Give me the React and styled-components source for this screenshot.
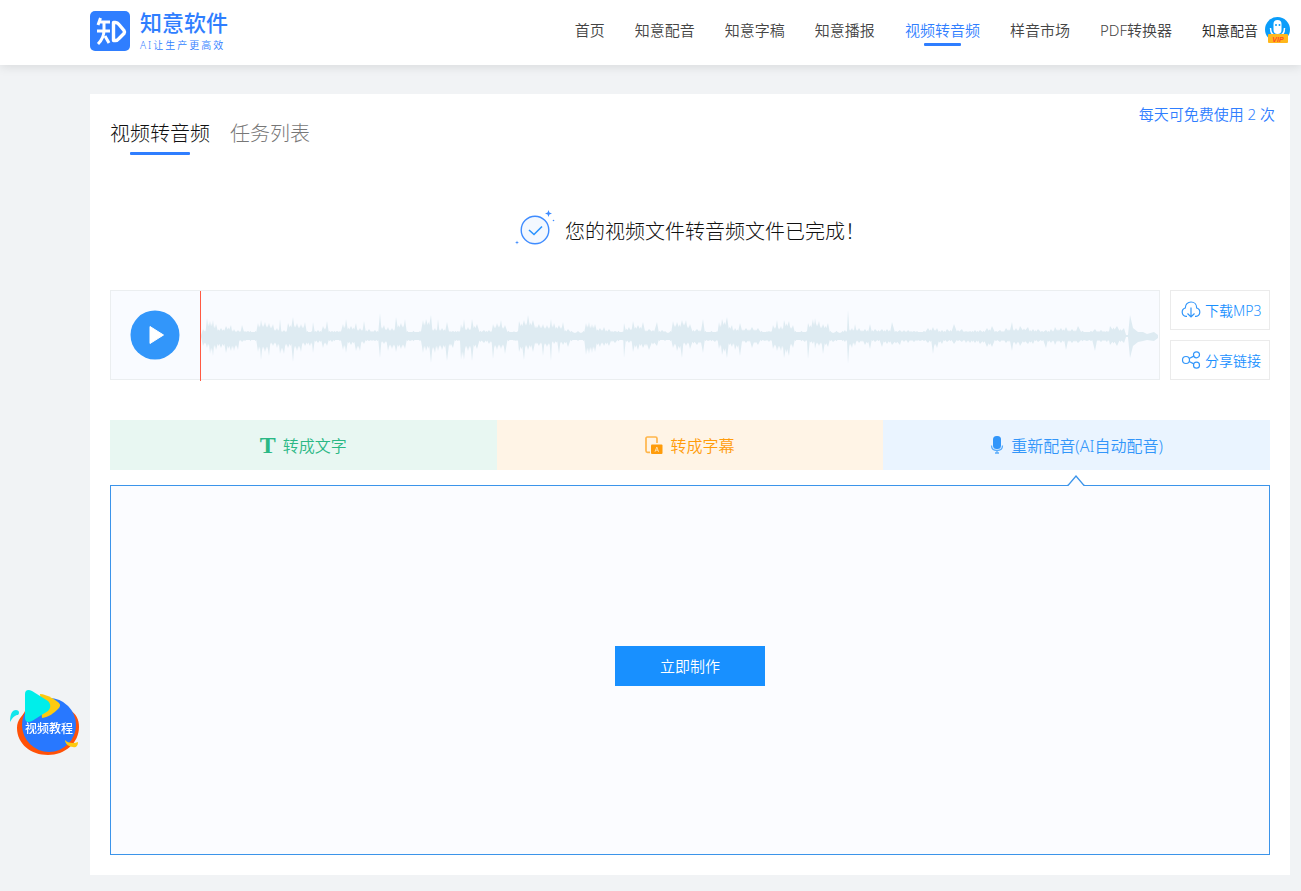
import React, { Fragment, useState } from "react";
import styled, { createGlobalStyle, css } from "styled-components";

const GlobalStyles = createGlobalStyle`
  * {
    box-sizing: border-box;
  }
  body {
    margin: 0;
    background: #f1f3f5;
    color: #222222;
    font-family: "Noto Sans", "Noto Sans CJK SC", "Microsoft YaHei", sans-serif;
    font-weight: 350;
    font-size: 15px;
  }
  button {
    font: inherit;
    border: 0;
    padding: 0;
    cursor: pointer;
  }
  a {
    text-decoration: none;
  }
  svg {
    display: block;
    flex-shrink: 0;
  }
`;

const links = [
  "首页",
  "知意配音",
  "知意字稿",
  "知意播报",
  "视频转音频",
  "样音市场",
  "PDF转换器",
];

/* x, height above the axis, height below the axis */
const peaks = [
  [2, 7, 10], [6, 18, 12], [9, 15, 18], [12, 16, 20], [15, 12, 14], [20, 8, 12],
  [25, 10, 17], [30, 11, 15], [33, 7, 15], [37, 6, 14], [41, 11, 6], [47, 5, 4],
  [52, 4, 4], [57, 13, 16], [60, 16, 24], [64, 14, 16], [68, 13, 20], [72, 12, 10],
  [76, 8, 12], [79, 17, 18], [83, 6, 18], [87, 13, 12], [92, 19, 26], [96, 13, 15],
  [100, 12, 16], [104, 14, 10], [109, 4, 10], [112, 14, 17], [117, 6, 7], [122, 10, 12],
  [126, 15, 10], [131, 5, 6], [136, 5, 4], [142, 12, 14], [145, 17, 17], [150, 10, 9],
  [155, 13, 15], [159, 8, 15], [163, 15, 8], [168, 7, 5], [174, 6, 5], [179, 23, 22],
  [183, 11, 8], [187, 9, 15], [191, 8, 13], [195, 19, 16], [200, 13, 13], [204, 17, 13],
  [209, 4, 5], [216, 4, 4], [222, 16, 17], [225, 17, 15], [230, 21, 27], [234, 8, 17],
  [237, 17, 15], [241, 8, 14], [246, 14, 25], [252, 5, 12], [257, 5, 5], [260, 12, 24],
  [263, 17, 24], [267, 9, 15], [271, 17, 25], [276, 12, 13], [283, 6, 7], [288, 6, 8],
  [292, 12, 23], [296, 13, 14], [300, 16, 13], [304, 11, 18], [311, 4, 4], [315, 4, 5],
  [318, 15, 16], [323, 16, 24], [327, 21, 14], [332, 16, 16], [338, 12, 10], [342, 12, 20],
  [346, 11, 11], [350, 17, 25], [353, 13, 8], [358, 11, 18], [362, 14, 9], [367, 7, 11],
  [374, 3, 4], [380, 3, 4], [385, 13, 19], [388, 14, 18], [391, 12, 17], [394, 12, 16],
  [399, 8, 11], [403, 9, 10], [408, 7, 10], [414, 5, 7], [421, 4, 4], [423, 13, 22],
  [428, 9, 7], [432, 15, 16], [437, 11, 14], [442, 14, 12], [448, 7, 14], [456, 14, 10],
  [461, 6, 4], [467, 3, 4], [472, 15, 12], [476, 14, 15], [481, 16, 22], [485, 16, 10],
  [489, 12, 13], [496, 7, 9], [502, 17, 17], [507, 4, 5], [514, 4, 6], [518, 14, 13],
  [521, 17, 19], [526, 19, 22], [531, 11, 11], [534, 8, 14], [539, 13, 20], [545, 8, 7],
  [551, 9, 12], [557, 8, 9], [564, 4, 5], [568, 5, 6], [572, 11, 13], [576, 16, 15],
  [580, 10, 15], [583, 16, 22], [588, 15, 20], [592, 11, 12], [597, 4, 4], [604, 4, 6],
  [607, 13, 23], [612, 17, 8], [614, 18, 13], [618, 15, 10], [622, 12, 18], [627, 13, 11],
  [632, 3, 6], [639, 3, 4], [644, 6, 6], [647, 26, 28], [651, 8, 12], [654, 12, 10],
  [658, 8, 7], [664, 7, 9], [669, 12, 13], [674, 7, 6], [681, 7, 11], [686, 7, 8],
  [691, 14, 9], [699, 6, 9], [703, 6, 6], [707, 6, 7], [713, 5, 6], [719, 4, 5],
  [727, 8, 7], [732, 9, 18], [736, 8, 12], [741, 6, 8], [746, 7, 6], [753, 12, 8],
  [761, 7, 6], [765, 5, 7], [769, 5, 7], [774, 6, 7], [779, 6, 8], [786, 8, 11],
  [791, 10, 11], [799, 6, 6], [805, 8, 7], [811, 14, 15], [815, 8, 9], [819, 10, 10],
  [827, 9, 8], [832, 7, 8], [837, 7, 6], [845, 6, 12], [850, 7, 7], [854, 9, 9],
  [860, 8, 7], [865, 9, 14], [871, 7, 7], [877, 10, 7], [886, 4, 5], [894, 7, 15],
  [900, 6, 6], [906, 5, 6], [909, 10, 9], [916, 10, 10], [923, 8, 7],
];

/* the recording breaks off for a moment before the last burst */
const tail = [
  [925, 1, 1], [927, 1, 1], [929, 21, 22], [932, 8, 10], [937, 4, 6],
  [942, 4, 5], [946, 2, 4], [953, 4, 5], [957, 1, 2],
];

const AXIS = 45;

const valley = (a, b) => Math.max(4, Math.min(a, b) * 0.65);

const buildWave = () => {
  const points = [[0, 1, 1]];
  peaks.forEach((peak, i) => {
    points.push(peak);
    const next = peaks[i + 1];
    if (next) {
      const [x, up, down] = peak;
      const gap = next[0] - x;
      const low = [valley(up, next[1]), valley(down, next[2])];
      points.push([x + gap * 0.35, ...low]);
      // a small tooth keeps wide gaps from going flat
      points.push([x + gap * 0.5, low[0] * 1.3, low[1] * 1.3]);
      points.push([x + gap * 0.65, ...low]);
    }
  });
  points.push(...tail);
  const top = points.map(([x, up]) => `${x},${AXIS - up}`);
  const bottom = points.map(([x, , down]) => `${x},${AXIS + down}`).reverse();
  return [...top, ...bottom].join(" ");
};

const LogoMark = () => (
  <svg width="40" height="40" viewBox="0 0 40 40" fill="none">
    <rect width="40" height="40" rx="5" fill="#2f7eff" />
    <g stroke="#ffffff" strokeWidth="3" strokeLinejoin="round">
      <path d="M10.5 7 8 14M9 11h11M7 20h13M14 11v8c0 6-2 10-6 14M15 25l4 7" />
      <path
        d="M23.500 11.500h2q2 0 3.500 2l5 6q1 1.500 0 3l-5 5q-1.500 2-3.500 2h-2z"
        strokeWidth="3.400"
      />
    </g>
  </svg>
);

const Avatar = () => (
  <svg width="25" height="27" viewBox="0 0 25 27">
    <circle cx="12.500" cy="12.500" r="12.500" fill="#0a9dfa" />
    <rect x="8.500" y="3" width="8" height="14" rx="4" fill="#ffffff" />
    <path d="M5.500 11c0 5 2 8 7 8s7-3 7-8" fill="none" stroke="#ffffff" strokeWidth="1.500" />
    <circle cx="11" cy="8" r="1" fill="#0a9dfa" />
    <circle cx="14.500" cy="8" r="1" fill="#0a9dfa" />
    <rect x="3" y="17" width="20" height="9" rx="1" fill="#ffb71c" />
    <text
      x="13"
      y="24.500"
      textAnchor="middle"
      fontSize="7"
      fontWeight="700"
      fontStyle="italic"
      fontFamily="Liberation Sans, sans-serif"
      fill="#ff4a26"
    >
      VIP
    </text>
  </svg>
);

const DoneIcon = () => (
  <svg width="40" height="36" viewBox="0 0 40 36" fill="none" stroke="#3f8cff">
    <circle cx="20" cy="20" r="13.800" fill="#f3f8ff" strokeWidth="1.400" />
    <path d="M14 20l5 4.500 8-8" stroke="#2a93ff" strokeWidth="1.600" />
    <path d="M33.500 0l.9 2.600 2.600.9-2.600.9-.9 2.600-.9-2.600-2.600-.9 2.600-.9z" fill="#3f8cff" stroke="none" />
    <path d="M2 30.500l.5 1.500 1.500.5-1.500.5-.5 1.500-.5-1.500L0 32.500l1.500-.5z" fill="#3f8cff" stroke="none" />
    <circle cx="38.500" cy="10.500" r=".8" fill="#3f8cff" stroke="none" />
  </svg>
);

const PlayIcon = () => (
  <svg width="50" height="50" viewBox="0 0 50 50">
    <circle cx="25" cy="25" r="24.500" fill="#3296fa" />
    <path d="M20 16.500v17l13.500-8.500z" fill="#ffffff" stroke="#ffffff" strokeLinejoin="round" />
  </svg>
);

const CloudIcon = () => (
  <svg width="20" height="18" viewBox="0 0 20 18" fill="none" stroke="#3296fa" strokeWidth="1.200">
    <path d="M6 15.400H5A4.300 4.300 0 0 1 4.300 7C4.300 3.500 6.700 1 10 1s5.700 2.500 5.700 6A4.300 4.300 0 0 1 15 15.400h-1" />
    <path d="M10 6.500v9.500M6.500 12.500 10 16l3.500-3.500" />
  </svg>
);

const ShareIcon = () => (
  <svg width="20" height="18" viewBox="0 0 20 18" fill="none" stroke="#3296fa" strokeWidth="1.200">
    <circle cx="5" cy="9" r="3.500" />
    <circle cx="15.500" cy="3.800" r="3" />
    <circle cx="15.500" cy="14.200" r="3" />
    <path d="M8.200 7.500 12.800 5.100M8.200 10.500l4.600 2.400" />
  </svg>
);

const SubtitleIcon = () => (
  <svg width="18" height="18" viewBox="0 0 18 18">
    <path d="M5 16.300H2.500a1.500 1.500 0 0 1-1.500-1.500v-12A1.500 1.500 0 0 1 2.500 1h8A1.500 1.500 0 0 1 12 2.500V7" fill="none" stroke="#ffb54a" strokeWidth="1.700" />
    <rect x="6" y="8.500" width="11.500" height="9.500" rx="1" fill="#ff9c0b" />
    <path d="M10 15.800l1.800-4.800 1.800 4.800M10.600 14.200h2.400" fill="none" stroke="#ffe2b5" strokeWidth=".9" />
  </svg>
);

const MicIcon = () => (
  <svg width="14" height="18" viewBox="0 0 14 18" fill="none" stroke="#5aacfb" strokeWidth="1.300">
    <rect x="3" y="0" width="8" height="13" rx="3.500" fill="#3296fa" stroke="none" />
    <path d="M1.500 9.500c0 3 2.200 5 5.500 5s5.500-2 5.500-5M7 14.500V17M5 17h4" />
  </svg>
);

const TutorialArt = () => (
  <svg width="70" height="66" viewBox="0 0 70 66">
    <path d="M7 38c0-9 6-12 8-17l45-1c6 4 9 9 9 17 0 16-14 28-31 28S7 54 7 38z" fill="#ff5108" />
    <circle cx="39" cy="35" r="27" fill="#2878ff" />
    <path d="M30 4c7 0 17 7 19 9 2 2 1 4-1 6-4 4-9 8-16 9z" fill="#fdca10" />
    <path d="M15 4c0-4 3-5 7-3l16 10c3 3 3 7 0 10L22 31c-4 2-7 1-7-3z" fill="#00eeea" />
    <path d="M0 32c0-8 2-12 6-12 3 0 4 3 2 5-3 0-5 2-8 7z" fill="#12e6ec" />
    <path d="M55 50c2 3 9 4 13 2 0 4-2 6-5 5-4 0-8-3-8-7z" fill="#fdca10" />
  </svg>
);

const App = () => {
  const [tab, setTab] = useState("convert");

  return (
    <Fragment>
      <GlobalStyles />
      <Header>
        <Logo href="#home">
          <LogoMark />
          <LogoText>
            <LogoName>知意软件</LogoName>
            <LogoSlogan>AI让生产更高效</LogoSlogan>
          </LogoText>
        </Logo>
        <Nav>
          {links.map((link) => (
            <NavLink key={link} href={`#${link}`} $active={link === "视频转音频"}>
              {link}
            </NavLink>
          ))}
          <User href="#user">
            知意配音
            <Avatar />
          </User>
        </Nav>
      </Header>

      <Card>
        <CardHead>
          <Tabs>
            <Tab $active={tab === "convert"} onClick={() => setTab("convert")}>
              视频转音频
            </Tab>
            <Tab $active={tab === "tasks"} onClick={() => setTab("tasks")}>
              任务列表
            </Tab>
          </Tabs>
          <Quota>每天可免费使用 2 次</Quota>
        </CardHead>

        <Result>
          <DoneIcon />
          您的视频文件转音频文件已完成！
        </Result>

        <Audio>
          <Player>
            <PlayButton aria-label="播放">
              <PlayIcon />
            </PlayButton>
            <Track>
              <Wave viewBox="0 0 958 88" preserveAspectRatio="none">
                <polygon points={buildWave()} fill="#deebf2" />
              </Wave>
              <Cursor />
            </Track>
          </Player>
          <Actions>
            <ActionButton>
              <CloudIcon />
              下载MP3
            </ActionButton>
            <ActionButton>
              <ShareIcon />
              分享链接
            </ActionButton>
          </Actions>
        </Audio>

        <Modes>
          <Mode $color="#2bb885" $bg="#e8f7f2">
            <LetterIcon>T</LetterIcon>
            转成文字
          </Mode>
          <Mode $color="#ff9c0b" $bg="#fff4e6">
            <SubtitleIcon />
            转成字幕
          </Mode>
          <Mode $color="#3296fa" $bg="#eaf4ff">
            <MicIcon />
            重新配音(AI自动配音)
          </Mode>
        </Modes>

        <Panel>
          <Pointer width="18" height="11" viewBox="0 0 18 11">
            <path d="M0 10.500 9 0l9 10.500V11H0z" fill="#fbfcff" />
            <path d="M0 10.500h1L9 1l8 9.500h1" fill="none" stroke="#3b94ea" strokeWidth="1.300" />
          </Pointer>
          <MakeButton>立即制作</MakeButton>
        </Panel>
      </Card>

      <Tutorial href="#tutorial">
        <TutorialArt />
        <TutorialLabel>视频教程</TutorialLabel>
      </Tutorial>
    </Fragment>
  );
};

export default App;

const Header = styled.header`
  display: flex;
  justify-content: space-between;
  align-items: flex-start;
  height: 65px;
  padding: 11px 11px 0 90px;
  background: #ffffff;
  box-shadow: 0 2px 10px rgba(0, 0, 0, 0.1);
`;

const Logo = styled.a`
  display: flex;
  align-items: flex-start;
  gap: 10px;
  color: #2f7eff;
`;

const LogoText = styled.span`
  display: flex;
  flex-direction: column;
`;

const LogoName = styled.span`
  font-size: 22px;
  font-weight: 500;
  line-height: 23px;
`;

const LogoSlogan = styled.span`
  font-size: 10px;
  line-height: 22px;
  letter-spacing: 2px;
`;

const Nav = styled.nav`
  display: flex;
  align-items: center;
  gap: 30px;
  height: 39px;
`;

const NavLink = styled.a`
  position: relative;
  padding-bottom: 2px;
  line-height: 28px;
  color: #444444;
  white-space: nowrap;

  ${({ $active }) =>
    $active &&
    css`
      color: #2f7eff;

      &::after {
        content: "";
        position: absolute;
        left: 25%;
        right: 25%;
        bottom: 0;
        height: 3px;
        border-radius: 1px;
        background: #2f7eff;
      }
    `}
`;

const User = styled.a`
  display: flex;
  align-items: center;
  gap: 7px;
  font-size: 14px;
  line-height: 24px;
  color: #222222;
  white-space: nowrap;
`;

const Card = styled.main`
  margin: 29px 11px 16px 90px;
  padding: 0 20px 20px;
  background: #ffffff;
`;

const CardHead = styled.div`
  display: flex;
  justify-content: space-between;
  align-items: flex-start;
`;

const Tabs = styled.div`
  display: flex;
  gap: 20px;
  padding-top: 20px;
`;

const Tab = styled.button`
  position: relative;
  height: 41px;
  padding-bottom: 2px;
  background: none;
  font-size: 20px;
  font-weight: 300;
  line-height: 38px;
  color: ${({ $active }) => ($active ? "#111111" : "#777777")};

  &::after {
    content: "";
    display: ${({ $active }) => ($active ? "block" : "none")};
    position: absolute;
    left: 20%;
    right: 20%;
    bottom: 0;
    height: 3px;
    border-radius: 1px;
    background: #2f7eff;
  }
`;

const Quota = styled.span`
  margin-right: -5px;
  line-height: 40px;
  color: #2f7eff;
`;

const Result = styled.div`
  display: flex;
  justify-content: center;
  align-items: flex-start;
  gap: 10px;
  margin-top: 55px;
  font-size: 20px;
  font-weight: 300;
  line-height: 44px;
  color: #111111;
`;

const Audio = styled.section`
  display: flex;
  gap: 10px;
  margin-top: 36px;
`;

const Player = styled.div`
  flex: 1;
  display: flex;
  height: 90px;
  border: 1px solid #ebeef0;
  background: #f9fbff;
`;

const PlayButton = styled.button`
  display: flex;
  justify-content: center;
  align-items: center;
  width: 89px;
  padding-right: 2px;
  background: none;
`;

const Track = styled.div`
  flex: 1;
  position: relative;
  padding-left: 1px;
`;

const Wave = styled.svg`
  width: 100%;
  height: 88px;
`;

const Cursor = styled.span`
  position: absolute;
  top: 0;
  left: 0;
  width: 1px;
  height: 90px;
  background: #ff5a43;
`;

const Actions = styled.div`
  display: flex;
  flex-direction: column;
  gap: 10px;
  width: 100px;
`;

const ActionButton = styled.button`
  display: flex;
  align-items: center;
  gap: 4px;
  height: 40px;
  padding-left: 10px;
  border: 1px solid #ebebeb;
  background: #ffffff;
  font-size: 14px;
  color: #1890ff;
  white-space: nowrap;
`;

const Modes = styled.div`
  display: grid;
  grid-template-columns: repeat(3, 1fr);
  margin-top: 40px;
`;

const Mode = styled.button`
  display: flex;
  justify-content: center;
  align-items: center;
  gap: 7px;
  height: 50px;
  background: ${({ $bg }) => $bg};
  color: ${({ $color }) => $color};
  font-size: 16px;
`;

const LetterIcon = styled.span`
  font-family: "Liberation Serif", serif;
  font-size: 24px;
  font-weight: 700;
`;

const Panel = styled.section`
  position: relative;
  height: 370px;
  margin-top: 15px;
  padding-top: 160px;
  border: 1px solid #3b94ea;
  background: #fbfcff;
  text-align: center;
`;

/* sits under the middle of the third mode */
const Pointer = styled.svg`
  position: absolute;
  top: -11px;
  left: calc(100% * 5 / 6);
  transform: translateX(-50%);
`;

const MakeButton = styled.button`
  width: 150px;
  height: 40px;
  padding-bottom: 2px;
  background: #1890ff;
  color: #ffffff;
`;

const Tutorial = styled.a`
  position: fixed;
  left: 10px;
  bottom: 135px;
`;

const TutorialLabel = styled.span`
  position: absolute;
  top: 30px;
  left: 15px;
  font-size: 12px;
  font-weight: 500;
  line-height: 18px;
  color: #ffffff;
  white-space: nowrap;
`;
